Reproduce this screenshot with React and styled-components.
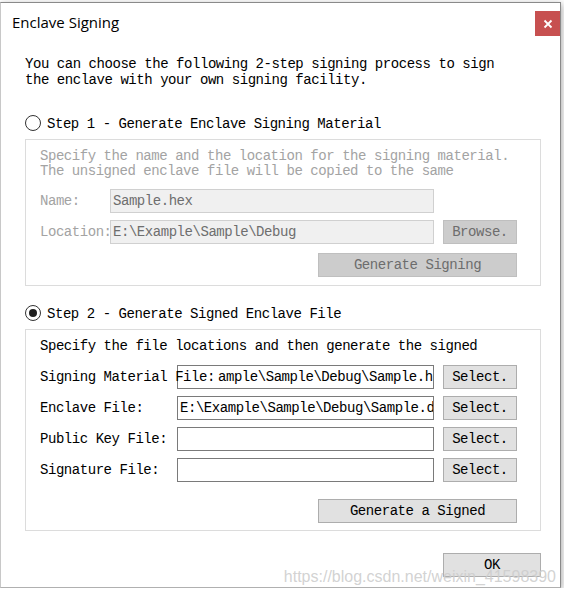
import React from "react";
import styled, { createGlobalStyle, css } from "styled-components";

const GlobalStyle = createGlobalStyle`
  html, body {
    margin: 0;
    padding: 0;
    background: #ffffff;
  }
  * {
    box-sizing: border-box;
  }
`;

const mono = css`
  font-family: "Liberation Mono", "DejaVu Sans Mono", monospace;
  font-size: 14px;
  letter-spacing: -0.45px;
`;

const Window = styled.div`
  position: relative;
  width: 561px;
  height: 586px;
  margin-top: 2px;
  background: #ffffff;
  border: 1px solid #8a8a8a;
  border-left-color: #c8c8c8;
  border-bottom-color: #b0b0b0;
  box-shadow: 1px 2px 7px rgba(0, 0, 0, 0.35);
  overflow: hidden;
`;

const TitleBar = styled.div`
  display: flex;
  justify-content: space-between;
  align-items: flex-start;
  height: 44px;
  padding: 8px 0 0 11px;
`;

const Title = styled.div`
  margin-top: 1px;
  font-family: "Open Sans", "Noto Sans", sans-serif;
  font-size: 15px;
  line-height: 20px;
  color: #000000;
`;

const CloseButton = styled.div`
  display: flex;
  align-items: center;
  justify-content: center;
  width: 25px;
  height: 25px;
  background: #c75050;
`;

const Body = styled.div`
  padding: 9px 19px 0 24px;
  ${mono};
  color: #000000;
`;

const Intro = styled.p`
  margin: 0;
  line-height: 16px;
  white-space: nowrap;
`;

const StepRow = styled.div`
  display: flex;
  align-items: flex-start;
  height: 18px;
  margin-top: ${(p) => p.$top}px;
`;

const Radio = styled.span`
  display: flex;
  align-items: center;
  justify-content: center;
  width: 16px;
  height: 16px;
  border: 1px solid #333333;
  border-radius: 50%;
  background: #ffffff;

  &::after {
    content: "";
    display: ${(p) => (p.$checked ? "block" : "none")};
    width: 8px;
    height: 8px;
    border-radius: 50%;
    background: #1f1f1f;
  }
`;

const StepLabel = styled.span`
  margin-left: 6px;
  line-height: 18px;
  white-space: nowrap;
`;

const Group = styled.div`
  margin-top: 6px;
  border: 1px solid #dcdcdc;
  padding: 9px 23px ${(p) => p.$bottom}px 14px;
  color: ${(p) => (p.$disabled ? "#a3a3a3" : "#000000")};
`;

const Hint = styled.div`
  line-height: 15px;
  white-space: nowrap;
`;

const FieldRow = styled.div`
  display: flex;
  align-items: center;
  margin-top: ${(p) => p.$top}px;
`;

const FieldLabel = styled.span`
  flex: none;
  width: ${(p) => p.$width}px;
  white-space: nowrap;
  line-height: 16px;
  position: ${(p) => (p.$over ? "relative" : "static")};
  z-index: ${(p) => (p.$over ? 1 : "auto")};
`;

const TextBox = styled.div`
  flex: none;
  width: ${(p) => p.$width}px;
  height: 24px;
  padding: 0 0 0 ${(p) => p.$pad || 2}px;
  line-height: 22px;
  white-space: nowrap;
  overflow: hidden;
  border: 1px solid ${(p) => (p.$disabled ? "#d0d0d0" : "#7a7a7a")};
  background: ${(p) => (p.$disabled ? "#f0f0f0" : "#ffffff")};
  color: ${(p) => (p.$disabled ? "#6e6e6e" : "#000000")};
`;

const Button = styled.div`
  flex: none;
  display: flex;
  align-items: center;
  justify-content: center;
  width: ${(p) => p.$width}px;
  height: 24px;
  margin-left: ${(p) => p.$gap || 0}px;
  ${mono};
  white-space: nowrap;
  border: 1px solid ${(p) => (p.$disabled ? "#bfbfbf" : "#adadad")};
  background: ${(p) => (p.$disabled ? "#cccccc" : "#e1e1e1")};
  color: ${(p) => (p.$disabled ? "#6d6d6d" : "#000000")};
`;

const ActionRow = styled.div`
  display: flex;
  justify-content: flex-end;
  margin-top: ${(p) => p.$top}px;
`;

const Footer = styled.div`
  display: flex;
  justify-content: flex-end;
  margin-top: 22px;
`;

const Watermark = styled.div`
  position: absolute;
  right: 4px;
  bottom: 1px;
  font-family: "Liberation Sans", Arial, sans-serif;
  font-size: 16px;
  line-height: 18px;
  color: rgba(205, 205, 205, 0.9);
  white-space: nowrap;
`;

const CloseIcon = () => (
  <svg width="10" height="10" viewBox="0 0 10 10">
    <path d="M1.5 1.5 L8.5 8.5 M8.5 1.5 L1.5 8.5" stroke="#ffffff" strokeWidth="1.8" />
  </svg>
);

// the first label runs past its column and over the edit box
const signFiles = [
  { label: "Signing Material File:", value: "ample\\Sample\\Debug\\Sample.hex", over: true, pad: 40 },
  { label: "Enclave File:", value: "E:\\Example\\Sample\\Debug\\Sample.dll" },
  { label: "Public Key File:", value: "" },
  { label: "Signature File:", value: "" },
];

export default function App() {
  return (
    <>
      <GlobalStyle />
      <Window>
        <TitleBar>
          <Title>Enclave Signing</Title>
          <CloseButton>
            <CloseIcon />
          </CloseButton>
        </TitleBar>
        <Body>
          <Intro>
            You can choose the following 2-step signing process to sign
            <br />
            the enclave with your own signing facility.
          </Intro>

          <StepRow $top={27}>
            <Radio />
            <StepLabel>Step 1 - Generate Enclave Signing Material</StepLabel>
          </StepRow>
          <Group $disabled $bottom={8}>
            <Hint>Specify the name and the location for the signing material.</Hint>
            <Hint>The unsigned enclave file will be copied to the same</Hint>
            <FieldRow $top={10}>
              <FieldLabel $width={70}>Name:</FieldLabel>
              <TextBox $width={324} $disabled>Sample.hex</TextBox>
            </FieldRow>
            <FieldRow $top={7}>
              <FieldLabel $width={70}>Location:</FieldLabel>
              <TextBox $width={324} $disabled>E:\Example\Sample\Debug</TextBox>
              <Button $width={74} $gap={9} $disabled>Browse.</Button>
            </FieldRow>
            <ActionRow $top={9}>
              <Button $width={199} $disabled>Generate Signing</Button>
            </ActionRow>
          </Group>

          <StepRow $top={19}>
            <Radio $checked />
            <StepLabel>Step 2 - Generate Signed Enclave File</StepLabel>
          </StepRow>
          <Group $bottom={7}>
            <Hint>Specify the file locations and then generate the signed</Hint>
            {signFiles.map((f, i) => (
              <FieldRow key={f.label} $top={i === 0 ? 11 : 7}>
                <FieldLabel $width={137} $over={f.over}>{f.label}</FieldLabel>
                <TextBox $width={257} $pad={f.pad}>{f.value}</TextBox>
                <Button $width={74} $gap={9}>Select.</Button>
              </FieldRow>
            ))}
            <ActionRow $top={17}>
              <Button $width={199}>Generate a Signed</Button>
            </ActionRow>
          </Group>

          <Footer>
            <Button $width={98}>OK</Button>
          </Footer>
        </Body>
        <Watermark>https://blog.csdn.net/weixin_41598390</Watermark>
      </Window>
    </>
  );
}
